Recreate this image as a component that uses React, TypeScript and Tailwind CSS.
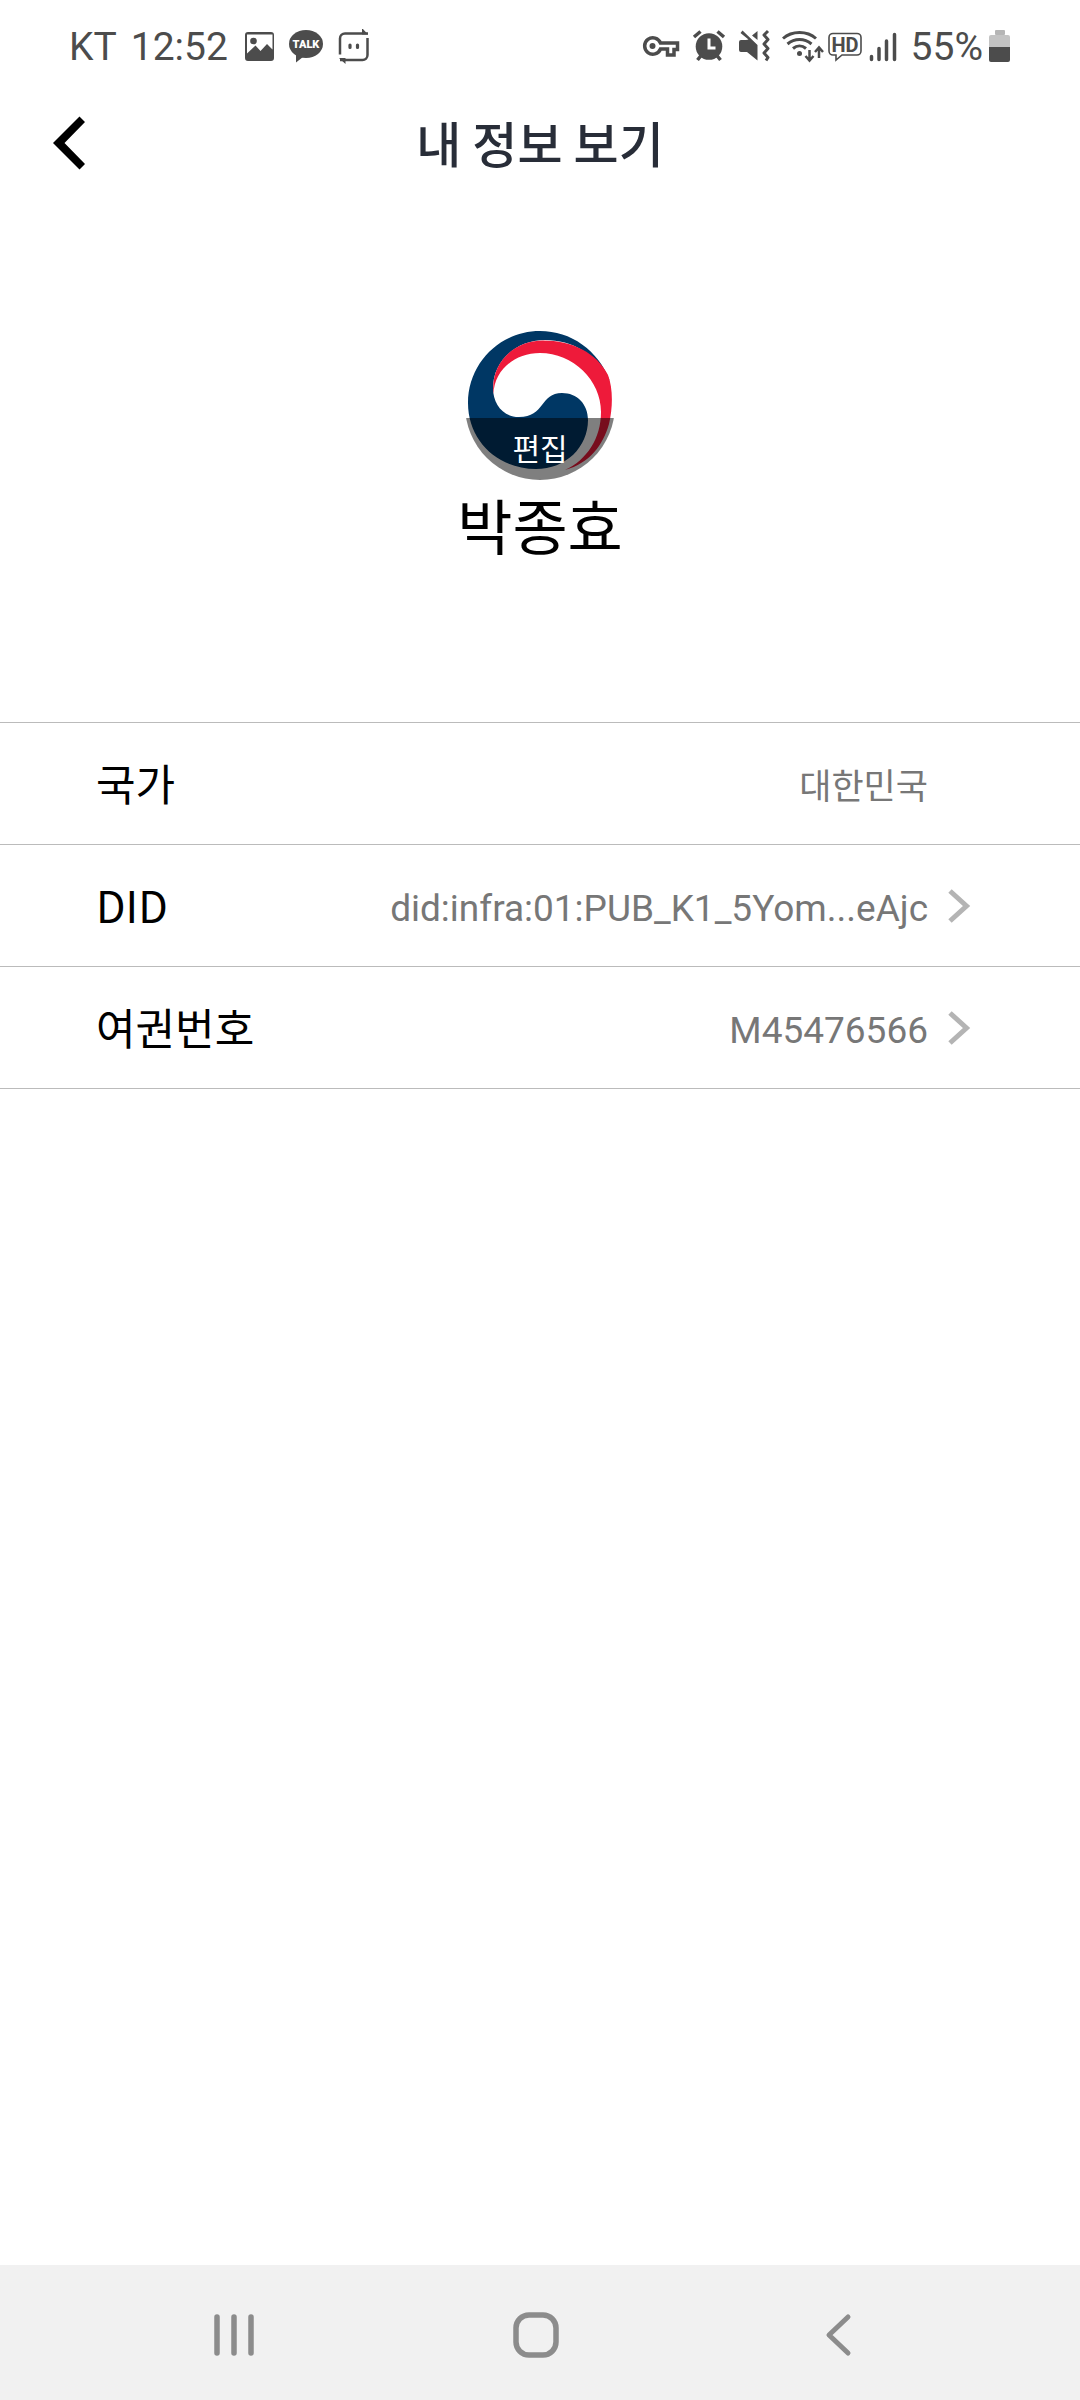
import type { ReactNode } from 'react';

const INK = '#4c4c4c';

function StatusBar() {
  return (
    <div className="flex h-[94px] items-center justify-between px-[69px] font-['Roboto',sans-serif] text-[39px] text-[#4c4c4c]">
      <div className="flex items-center">
        <span>KT</span>
        <span className="ml-[14px]">12:52</span>
        <svg className="ml-4 h-[36px] w-[128px]" viewBox="244 28 128 36" fill="none" aria-hidden="true">
          <path
            fill={INK}
            fillRule="evenodd"
            d="M248 31h23a3 3 0 0 1 3 3v23a3 3 0 0 1-3 3h-23a3 3 0 0 1-3-3V34a3 3 0 0 1 3-3Zm-1 2.500v19l8.500-8 5 5.500 6.500-7 5.500 5.500V33.500H247Z"
          />
          <circle cx="253.500" cy="40" r="3.300" fill={INK} />
          <ellipse cx="306" cy="43" rx="17" ry="14" fill={INK} />
          <path fill={INK} d="M296 52h12l-12 9.500Z" />
          <text x="306" y="47" fill="#fff" textAnchor="middle" fontFamily="Roboto, sans-serif" fontSize="11" fontWeight="900">
            TALK
          </text>
          <path stroke={INK} strokeWidth="2.500" d="M340 53.500V37.500a5 5 0 0 1 5-5h23M367.500 37v17a5 5 0 0 1-5 5H340" />
          <path fill={INK} d="M362 27l6 6.500h-6ZM345.500 63L339 57h6.500Z" />
          <path stroke={INK} strokeWidth="3.200" strokeLinecap="round" d="M350 44v2.500M357.500 44v2.500" />
        </svg>
      </div>
      <div className="flex items-center">
        <svg className="h-[36px] w-[262px]" viewBox="642 28 262 36" fill="none" aria-hidden="true">
          <path stroke={INK} strokeWidth="3.500" d="M661.500 42H678.500v6.500h-3.500V54h-6.500v-6h-7a8.200 8.200 0 1 1 0-6Z" />
          <circle cx="653.500" cy="45" r="3" fill={INK} />
          <circle cx="710" cy="45.500" r="13.300" fill={INK} />
          <path stroke={INK} strokeWidth="3.500" d="M695 36l6.500-5.500M725 36l-6.500-5.500M698.500 59l4-5M721.500 59l-4-5" />
          <path stroke="#fff" strokeWidth="3" d="M710 37.500V47h6.500" />
          <path
            fill={INK}
            d="M742 39h5l2.500-.5-8-6.500 2-2.500L758.500 44v15.500L748 51h-6a2 2 0 0 1-2-2v-8a2 2 0 0 1 2-2ZM758.500 30v9l-5.500-4.500Z"
          />
          <path stroke={INK} strokeWidth="3" strokeLinejoin="round" d="M769 30l-4 4 4 4.500-4 4.500 4 4.500-4 4.500 4 4.500-2 3" />
          <path stroke={INK} strokeWidth="3" d="M784 37.500c9-8 24-8 33 0M788.500 43c7-6 17-6 24 0M794 47.500c4-3.500 9-3.500 13 0" />
          <circle cx="800.500" cy="52.500" r="2.500" fill={INK} />
          <path stroke={INK} strokeWidth="2.500" d="M810.500 49v10M806.500 55l4 4.500 4-4.500M820 57V47M816 51l4-4.500 4 4.500" />
          <path
            stroke={INK}
            strokeWidth="1.600"
            d="M834 32.500h24a4 4 0 0 1 4 4V50a4 4 0 0 1-4 4h-15l-6 5v-5h-3a4 4 0 0 1-4-4V36.500a4 4 0 0 1 4-4Z"
          />
          <text x="846" y="50.500" fill={INK} textAnchor="middle" fontFamily="Roboto, sans-serif" fontSize="20" fontWeight="700">
            HD
          </text>
          <path stroke={INK} strokeWidth="3.500" strokeLinecap="round" d="M872.500 55.500v3M880 47.500v11M887.500 40v18.500M895.500 33.500v25" />
        </svg>
        <span className="ml-2">55%</span>
        <svg className="ml-1 h-[36px] w-[24px]" viewBox="988 28 24 36" aria-hidden="true">
          <path fill="#c3c3c3" d="M992 34h17a2 2 0 0 1 2 2v11h-21V36a2 2 0 0 1 2-2Z" />
          <rect x="996" y="29" width="10" height="5" rx="1" fill="#b5b5b5" />
          <path fill={INK} d="M990 46h21v13a2 2 0 0 1-2 2h-17a2 2 0 0 1-2-2Z" />
        </svg>
      </div>
    </div>
  );
}

function Emblem() {
  return (
    <svg className="h-[150px] w-[150px]" viewBox="465 330 150 150" aria-hidden="true">
      <path
        fill="#003764"
        d="M610 381C598 350 571 331 540 331C500 331 468 363 468 403C468 441 498 469 536 469C566 469 588 447 588 420C588 404 577 393 562 393C540 393 545 417 519 417C503 417 493 404 493 388C493 362 515 340 545 340C572 340 597 354 610 381Z"
      />
      <path
        fill="#ee1a3a"
        d="M493.500 394C490 364 513 340.500 543 340.500C572 340.500 597 353 608 375C613 388 613 407 609 424C603 445 590 463 565 470C587 460 601 438 601 412C601 380 573 353 540 353C514 353 494 371 493.500 394Z"
      />
    </svg>
  );
}

interface RowProps {
  label: string;
  value: string;
  link?: boolean;
}

function Row({ label, value, link }: RowProps) {
  const body: ReactNode = (
    <>
      <span className="pb-0.5 text-[43px] text-black">{label}</span>
      <span className="flex items-center">
        {link ? (
          <span className="pt-1.5 font-['Roboto',sans-serif] text-[37px] text-[#777]">{value}</span>
        ) : (
          <span className="pt-0.5 text-[35px] text-[#777]">{value}</span>
        )}
        <span className="flex w-[43px] justify-end">
          {link && (
            <svg className="h-[36px] w-[23px]" viewBox="0 0 23 36" fill="none" stroke="#b4b4b4" strokeWidth="5" aria-hidden="true">
              <path d="M2 3l16.500 15L2 33" />
            </svg>
          )}
        </span>
      </span>
    </>
  );
  const cls = 'flex h-[121px] w-full items-center justify-between pl-24 pr-[109px] text-left';
  return (
    <li className="border-b border-[#bbb]">
      {link ? (
        <button type="button" className={cls}>
          {body}
        </button>
      ) : (
        <div className={cls}>{body}</div>
      )}
    </li>
  );
}

export default function App() {
  return (
    <div className="flex min-h-screen flex-col bg-white font-['Noto_Sans_CJK_KR',sans-serif]">
      <StatusBar />
      <header className="grid h-[98px] grid-cols-[140px_1fr_140px] items-center">
        <button type="button" aria-label="뒤로" className="pl-[52px]">
          <svg className="h-[54px] w-[34px]" viewBox="52 116 34 54" aria-hidden="true">
            <path d="M53 143L79.500 116.500L85 122L64.500 143L85 164L79.500 169.500Z" />
          </svg>
        </button>
        <h1 className="pb-0.5 text-center text-[49px] leading-[72px] font-medium text-[#282d38]">내 정보 보기</h1>
      </header>
      <main className="flex grow flex-col">
        <section className="flex h-[530px] flex-col items-center pt-[138px]">
          <button type="button" className="relative h-[150px] w-[150px] overflow-hidden rounded-full">
            <Emblem />
            <span className="absolute inset-x-0 bottom-0 h-[62px] bg-black/50 text-[30px] leading-[58px] text-white">편집</span>
          </button>
          <h2 className="text-[60px] leading-[88px] text-black">박종효</h2>
        </section>
        <ul className="border-t border-[#bbb]">
          <Row label="국가" value="대한민국" />
          <Row label="DID" value="did:infra:01:PUB_K1_5Yom...eAjc" link />
          <Row label="여권번호" value="M45476566" link />
        </ul>
      </main>
      <nav className="flex h-[135px] items-center justify-between bg-[#f1f1f1] px-[212px] pt-1">
        <button type="button" aria-label="최근 앱">
          <svg className="h-[46px] w-[44px]" viewBox="0 0 44 46" stroke="#8c8c8c" strokeWidth="5.500" strokeLinecap="round" aria-hidden="true">
            <path d="M5 5v36M22 5v36M39 5v36" />
          </svg>
        </button>
        <button type="button" aria-label="홈">
          <svg className="h-[46px] w-[46px]" viewBox="0 0 46 46" fill="none" stroke="#8c8c8c" strokeWidth="5.500" aria-hidden="true">
            <rect x="3" y="3" width="40" height="40" rx="13" />
          </svg>
        </button>
        <button type="button" aria-label="이전">
          <svg className="h-[46px] w-[52px]" viewBox="-8 0 52 46" fill="none" stroke="#8c8c8c" strokeWidth="5" strokeLinecap="round" strokeLinejoin="round" aria-hidden="true">
            <path d="M24 5L5 23l19 18" />
          </svg>
        </button>
      </nav>
    </div>
  );
}
